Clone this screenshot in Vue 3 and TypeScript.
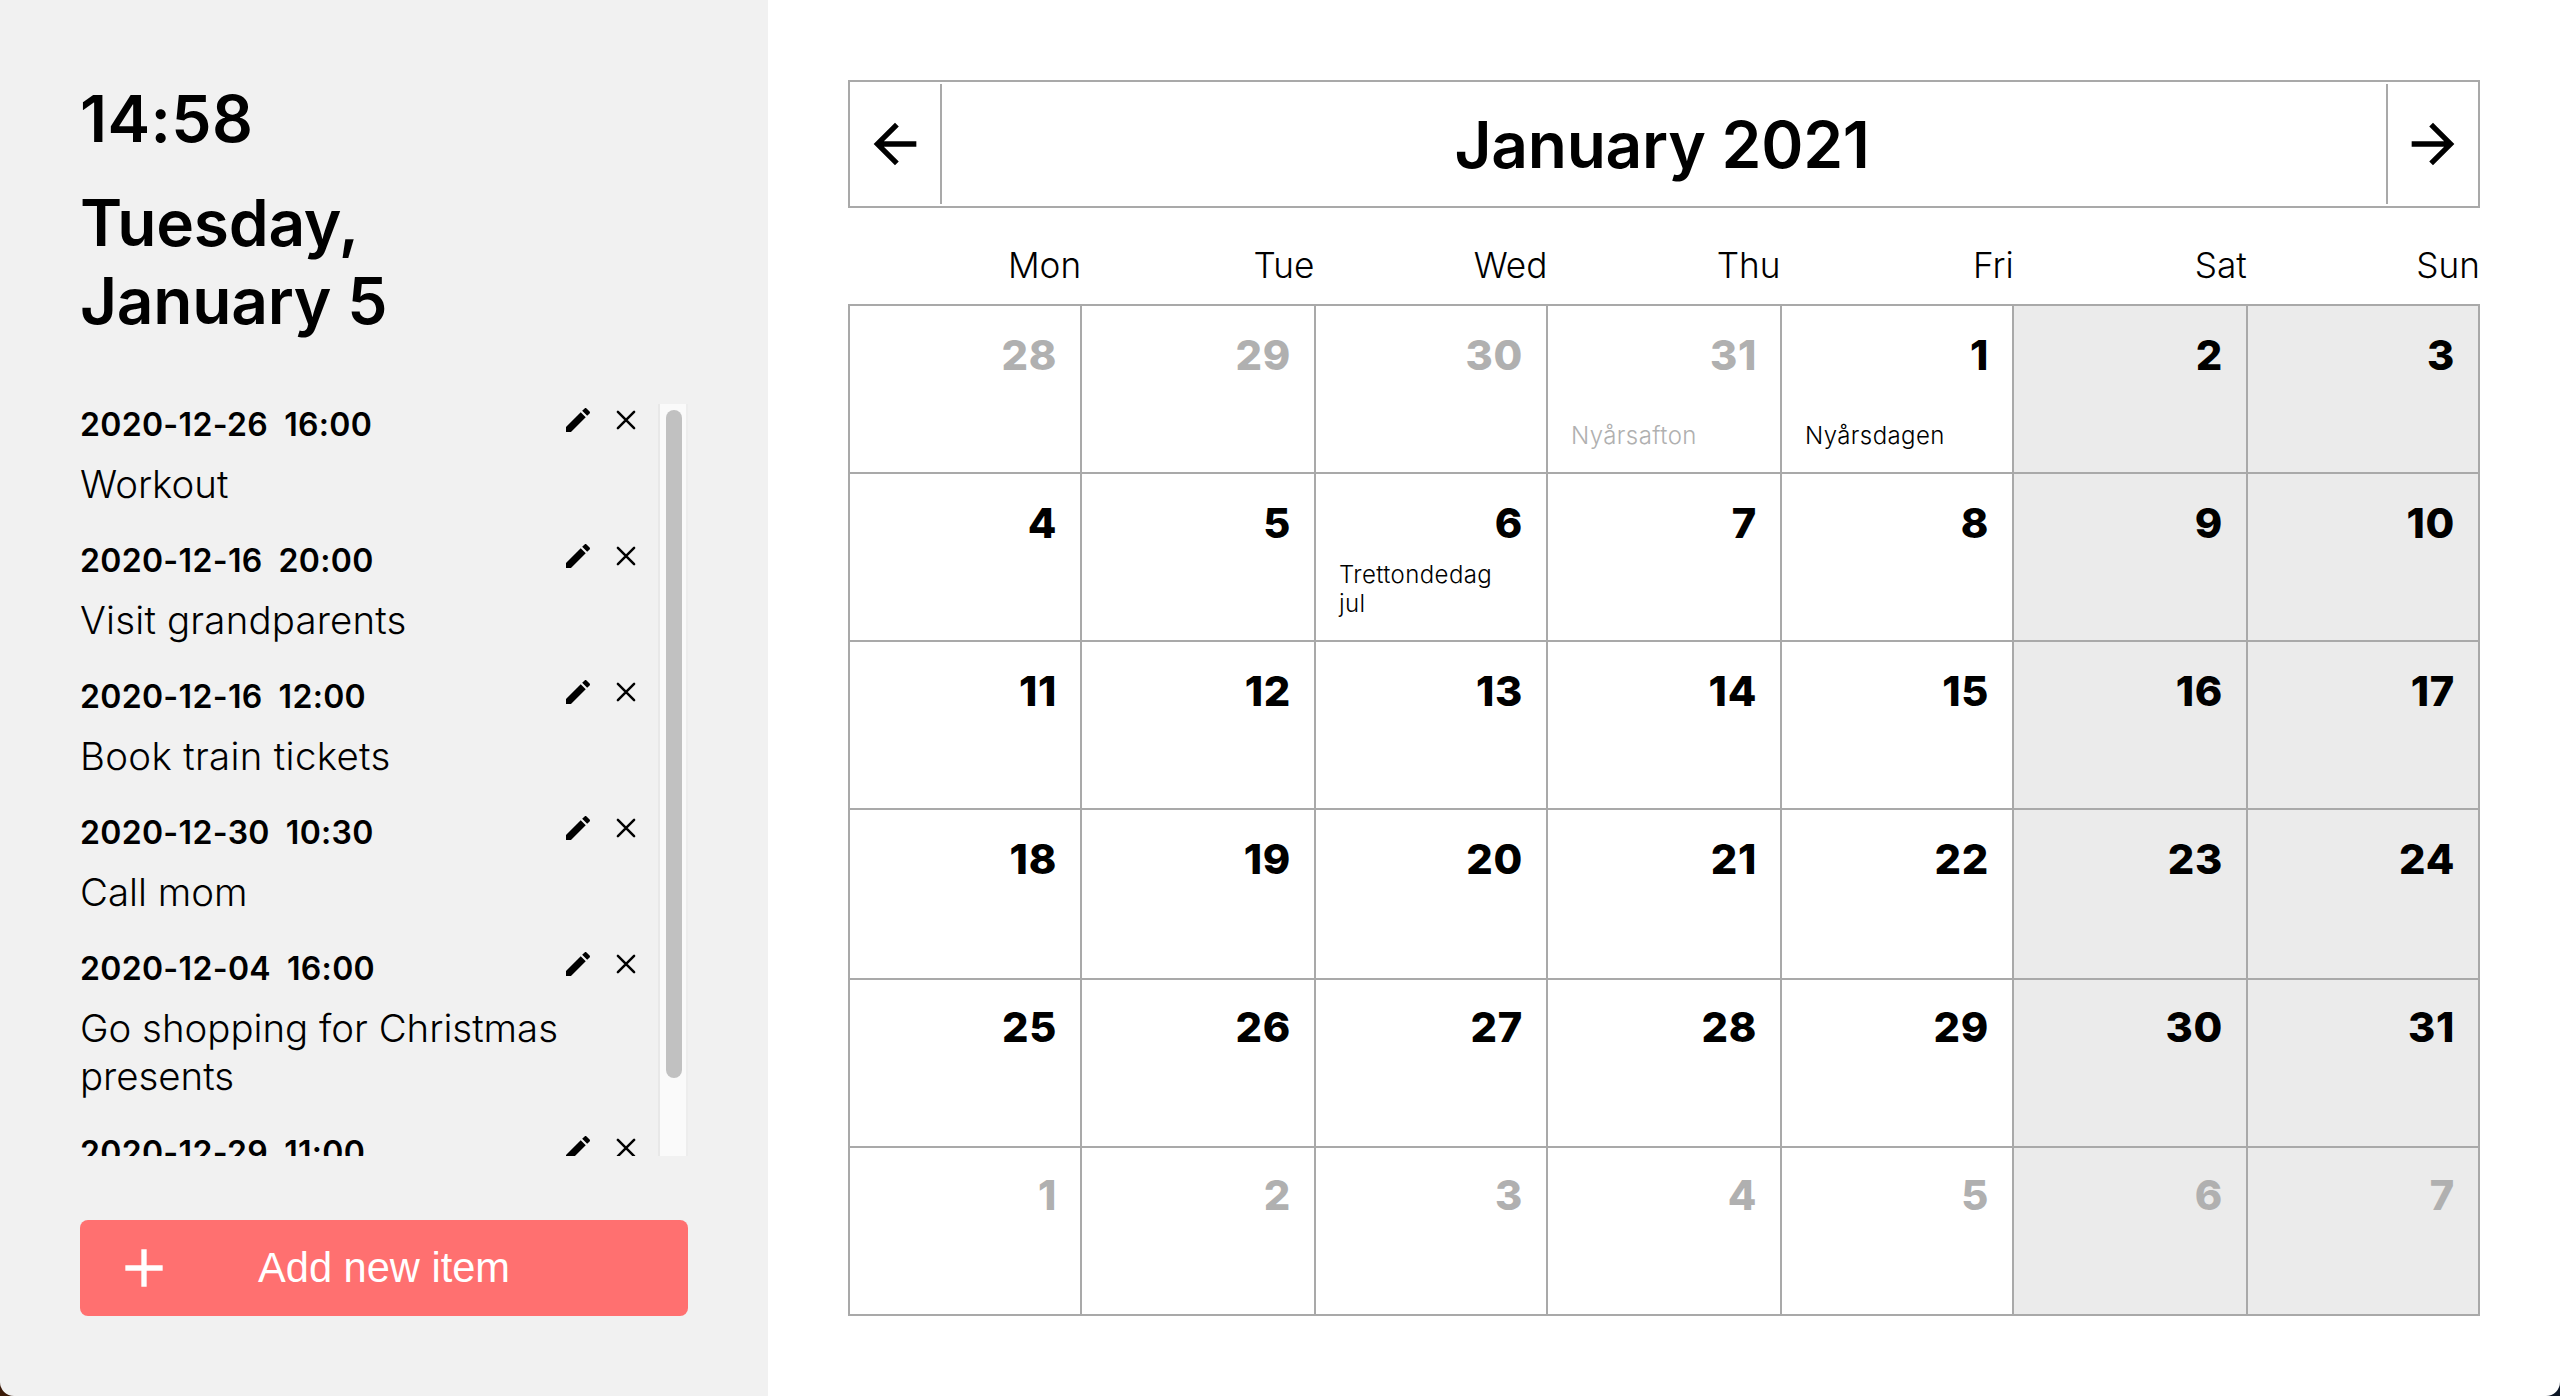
<script setup lang="ts">
interface Todo {
  date: string
  time: string
  text: string
}

interface Day {
  num: number
  muted: boolean
  weekend: boolean
  holiday?: string
}

const todos: Todo[] = [
  { date: '2020-12-26', time: '16:00', text: 'Workout' },
  { date: '2020-12-16', time: '20:00', text: 'Visit grandparents' },
  { date: '2020-12-16', time: '12:00', text: 'Book train tickets' },
  { date: '2020-12-30', time: '10:30', text: 'Call mom' },
  { date: '2020-12-04', time: '16:00', text: 'Go shopping for Christmas presents' },
  { date: '2020-12-29', time: '11:00', text: '' },
]

const weekdays = ['Mon', 'Tue', 'Wed', 'Thu', 'Fri', 'Sat', 'Sun']

const holidays: Record<string, string> = {
  '2020-12-31': 'Nyårsafton',
  '2021-01-01': 'Nyårsdagen',
  '2021-01-06': 'Trettondedag jul',
}

const days: Day[] = Array.from({ length: 42 }, (_, i) => {
  const d = new Date(Date.UTC(2020, 11, 28 + i))
  return {
    num: d.getUTCDate(),
    muted: d.getUTCMonth() !== 0,
    weekend: i % 7 > 4,
    holiday: holidays[d.toISOString().slice(0, 10)],
  }
})
</script>

<template>
  <div class="app">
    <aside class="sidebar">
      <header class="now">
        <h1 class="clock">14:58</h1>
        <h1 class="today">Tuesday,<br />January 5</h1>
      </header>
      <div class="list-wrap">
        <ul class="list">
          <li v-for="(todo, i) in todos" :key="i" class="item">
            <div class="item-head">
              <h4 class="when"><span>{{ todo.date }}</span><span>{{ todo.time }}</span></h4>
              <span class="actions">
                <svg class="icon" viewBox="0 0 24 24"><path d="M3 17.25V21h3.75L17.81 9.94l-3.75-3.75L3 17.25zM20.71 7.04c.39-.39.39-1.02 0-1.41l-2.34-2.34c-.39-.39-1.02-.39-1.41 0l-1.83 1.83 3.75 3.75 1.83-1.83z" /></svg>
                <svg class="icon" viewBox="0 0 32 32"><path d="M7.9 7.9l16.2 16.2M24.1 7.9L7.9 24.1" fill="none" stroke="#000" stroke-width="2.5" stroke-linecap="round" /></svg>
              </span>
            </div>
            <p v-if="todo.text" class="what">{{ todo.text }}</p>
          </li>
        </ul>
        <div class="track"><div class="thumb"></div></div>
      </div>
      <button class="add">
        <svg class="plus" viewBox="0 0 24 24"><path d="M19 13h-6v6h-2v-6H5v-2h6V5h2v6h6v2z" /></svg>
        <span>Add new item</span>
        <i class="balance"></i>
      </button>
    </aside>

    <main class="calendar">
      <div class="month-bar">
        <button class="nav prev">
          <svg viewBox="0 0 24 24"><path d="M20 11H7.83l5.59-5.59L12 4l-8 8 8 8 1.41-1.41L7.83 13H20v-2z" /></svg>
        </button>
        <h1 class="month">January 2021</h1>
        <button class="nav next">
          <svg viewBox="0 0 24 24"><path d="M12 4l-1.41 1.41L16.17 11H4v2h12.17l-5.58 5.59L12 20l8-8z" /></svg>
        </button>
      </div>
      <div class="weekdays">
        <span v-for="w in weekdays" :key="w">{{ w }}</span>
      </div>
      <div class="grid">
        <div
          v-for="(day, i) in days"
          :key="i"
          class="day"
          :class="{ muted: day.muted, weekend: day.weekend }"
        >
          <strong class="num">{{ day.num }}</strong>
          <span v-if="day.holiday" class="holiday">{{ day.holiday }}</span>
        </div>
      </div>
    </main>
  </div>
</template>

<style>
body {
  margin: 0;
  background: linear-gradient(90deg, #3a1a08 50%, #0c1626 50%);
}
</style>

<style scoped>
.app {
  display: flex;
  width: 2560px;
  height: 1396px;
  font-family: Inter, 'Liberation Sans', sans-serif;
  color: #000;
}

h1,
h4,
p,
ul {
  margin: 0;
  padding: 0;
}

h1 {
  font-size: 64px;
  font-weight: 600;
  line-height: 78px;
  letter-spacing: -0.25px;
}

button {
  border: 0;
  padding: 0;
  background: none;
}

.sidebar {
  box-sizing: border-box;
  display: flex;
  flex-direction: column;
  width: 768px;
  padding: 80px;
  background: #f1f1f1;
  border-bottom-left-radius: 14px;
}

.now {
  display: flex;
  flex-direction: column;
  gap: 26px;
  height: 324px;
}

.clock {
  letter-spacing: 0.4px;
}

.list-wrap {
  display: flex;
  height: 752px;
  overflow: hidden;
}

.list {
  flex: 1;
  list-style: none;
}

.item {
  margin-bottom: 32px;
}

.item-head {
  display: flex;
  justify-content: space-between;
  height: 48px;
  padding-right: 16px;
}

.when {
  display: flex;
  gap: 16px;
  padding-top: 1px;
  font-size: 32px;
  font-weight: 600;
  line-height: 39px;
  letter-spacing: 0.32px;
}

.actions {
  display: flex;
  gap: 16px;
}

.icon {
  width: 32px;
  height: 32px;
}

.what {
  padding-top: 8px;
  padding-right: 50px;
  font-size: 38.4px;
  font-weight: 300;
  line-height: 48px;
}

.item:nth-child(2) .what {
  letter-spacing: 0.2px;
}

.item:nth-child(3) .what {
  letter-spacing: 0.33px;
}

.track {
  box-sizing: border-box;
  width: 30px;
  padding: 6px 4px 0 6px;
  background: #fafafa;
  border-left: 2px solid #e8e8e8;
  border-right: 2px solid #ededed;
}

.thumb {
  width: 16px;
  height: 668px;
  border-radius: 8px;
  background: #c1c1c1;
}

.add {
  display: flex;
  align-items: center;
  justify-content: space-between;
  height: 96px;
  margin-top: 64px;
  padding: 0 32px;
  border-radius: 8px;
  background: #ff7070;
  color: #fff;
  font: 41.6px 'Liberation Sans', Arial, sans-serif;
}

.plus,
.balance {
  width: 64px;
  height: 64px;
  fill: #fff;
}

.calendar {
  box-sizing: border-box;
  flex: 1;
  padding: 80px;
  background: #fff;
  border-bottom-right-radius: 14px;
}

.month-bar {
  box-sizing: border-box;
  display: flex;
  height: 128px;
  padding: 2px;
  border: 2px solid #a9a9a9;
}

.nav {
  display: flex;
  align-items: center;
  justify-content: center;
  width: 90px;
}

.nav svg {
  width: 64px;
  height: 64px;
}

.prev {
  padding-right: 2px;
  border-right: 2px solid #a9a9a9;
}

.next {
  padding-left: 1px;
  border-left: 2px solid #a9a9a9;
}

.month {
  flex: 1;
  padding-right: 4px;
  line-height: 122px;
  text-align: center;
}

.weekdays {
  display: grid;
  grid-template-columns: repeat(7, 1fr);
  height: 96px;
  font-size: 35.2px;
  font-weight: 300;
  line-height: 115px;
  text-align: right;
}

.grid {
  box-sizing: border-box;
  display: grid;
  grid-template-columns: 232px 234px 232px 234px 232px 234px 232px;
  grid-template-rows: 168px 168px 168px 170px 168px 168px;
  height: 1012px;
  border-top: 2px solid #a9a9a9;
  border-left: 2px solid #a9a9a9;
}

.day {
  box-sizing: border-box;
  display: flex;
  flex-direction: column;
  justify-content: space-between;
  min-width: 0;
  min-height: 0;
  padding: 24px 23px 22px;
  border-right: 2px solid #a9a9a9;
  border-bottom: 2px solid #a9a9a9;
}

.day:nth-child(n + 29) {
  padding-top: 22px;
}

.weekend {
  background: #ebebeb;
}

.num {
  font-size: 41.6px;
  font-weight: 850;
  line-height: 50px;
  letter-spacing: 0.7px;
  text-align: right;
}

.holiday {
  padding-right: 12px;
  font-size: 24px;
  font-weight: 300;
  line-height: 29px;
  letter-spacing: 0.4px;
}

.muted {
  color: #b0b0b0;
}
</style>
